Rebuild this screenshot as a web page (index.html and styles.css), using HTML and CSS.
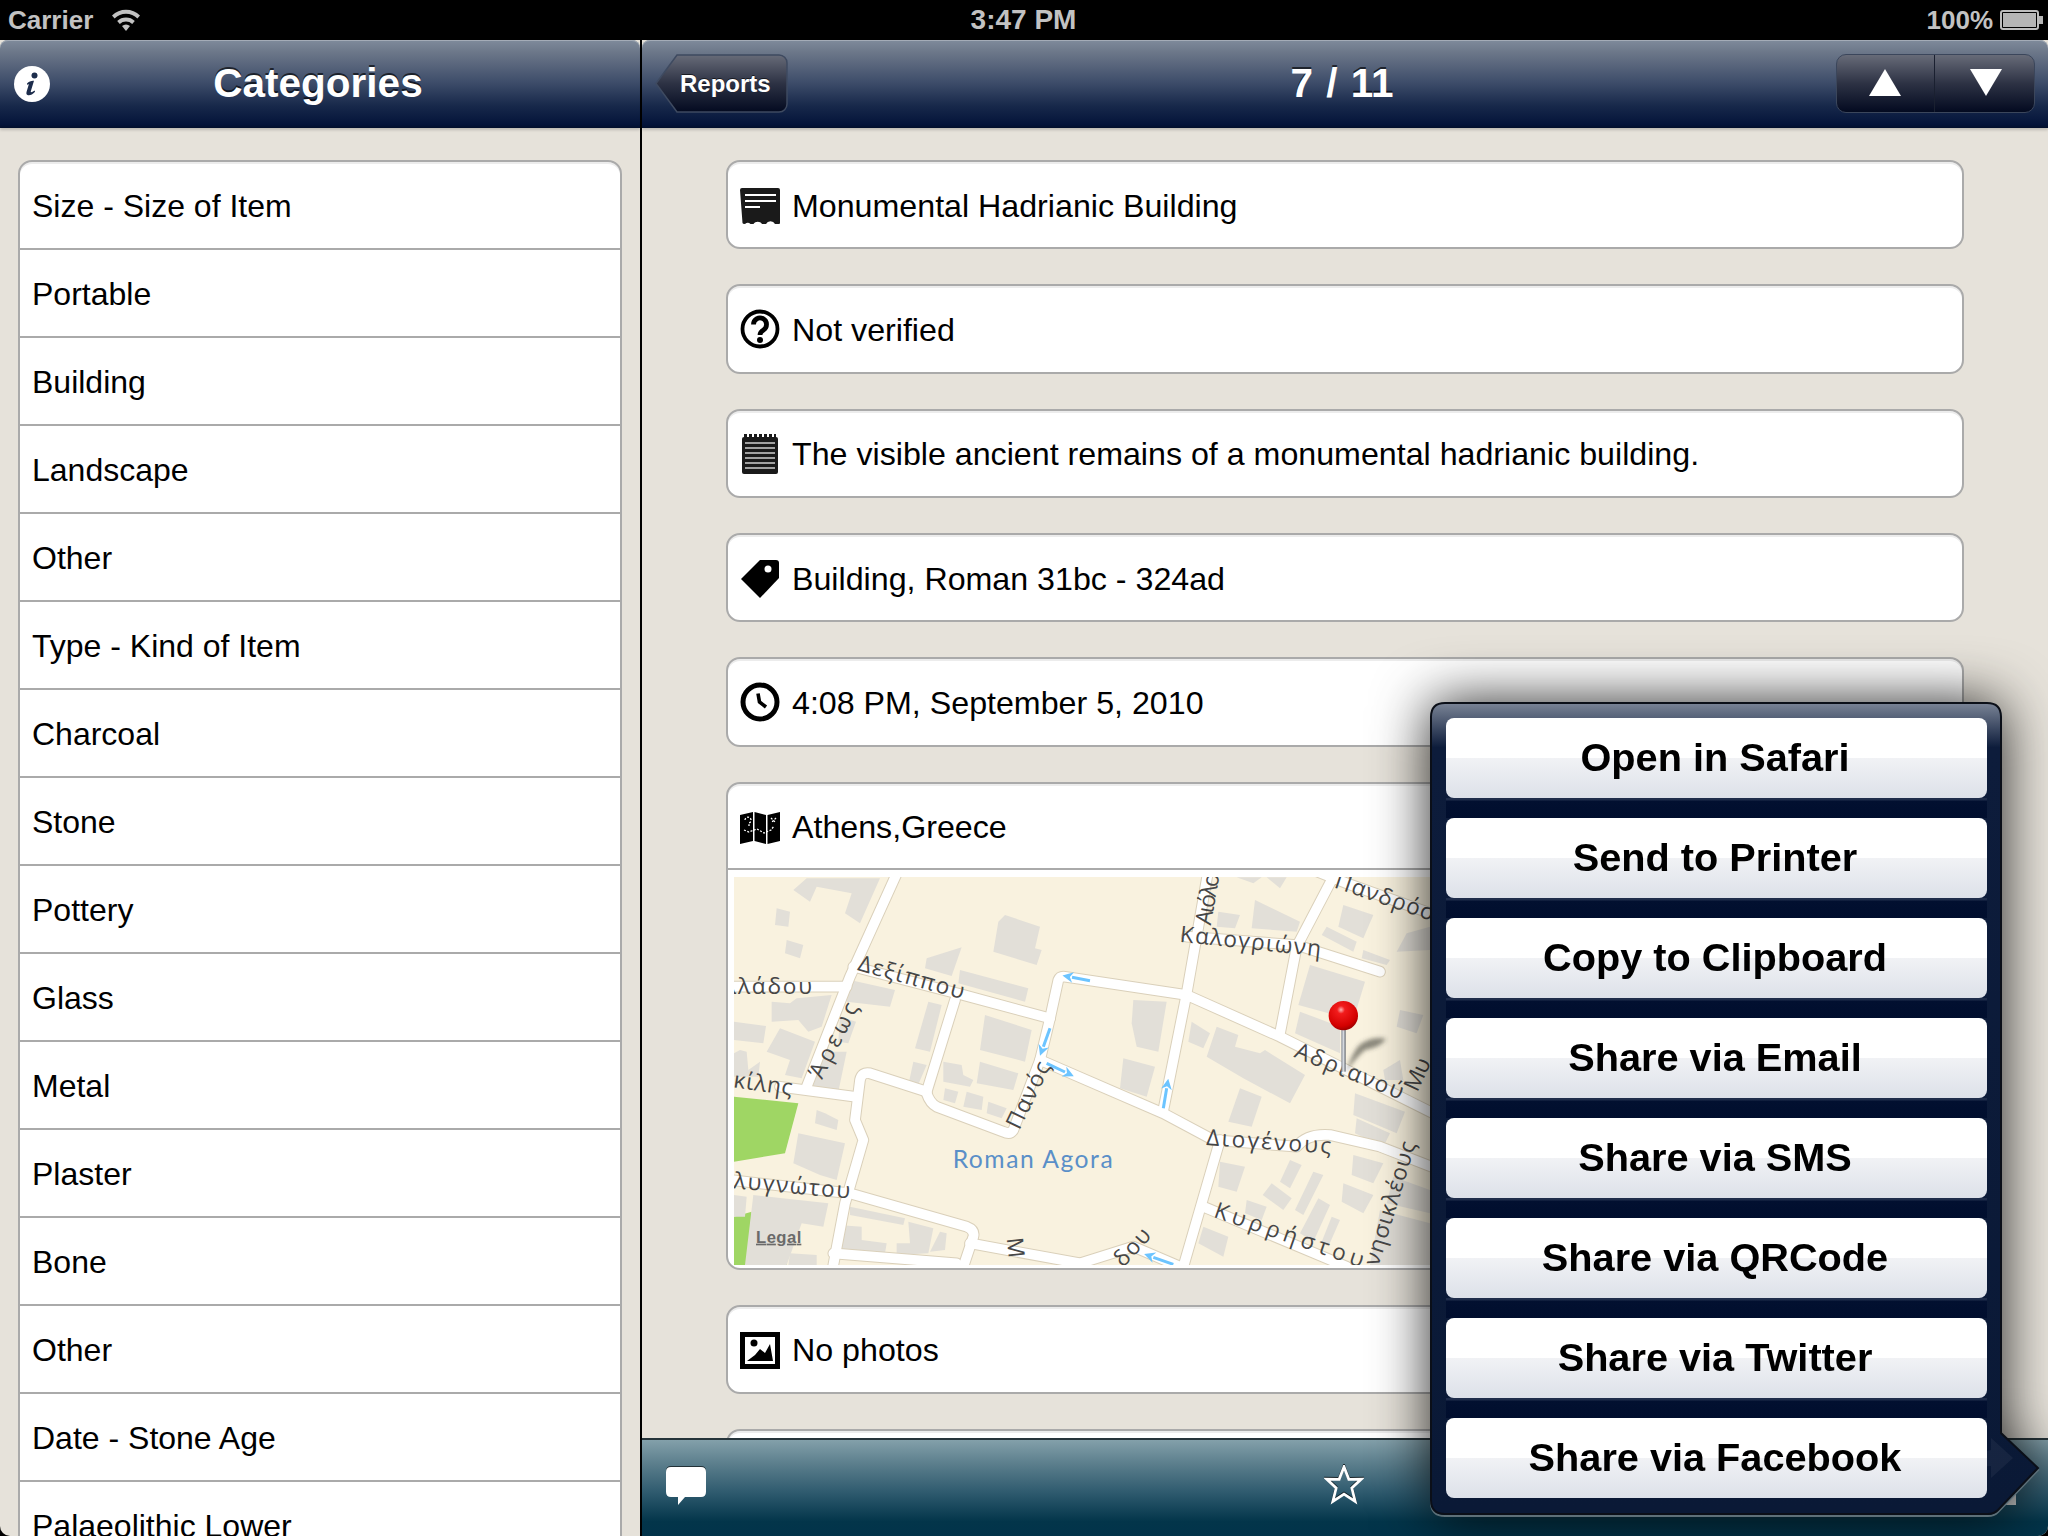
FILE: index.html
```html
<!DOCTYPE html>
<html lang="en">
<head>
<meta charset="utf-8">
<title>Reports</title>
<link rel="stylesheet" href="styles.css">
</head>
<body>
<div class="screen">
  <header class="status">
    <div class="status-left">
      <span>Carrier</span>
      <svg class="wifi" viewBox="0 0 30 24"><path d="M1 8.500a20 20 0 0 1 28 0l-2.600 3a16 16 0 0 0-22.800 0z"/><path d="M6.200 14a13 13 0 0 1 17.600 0l-2.600 3a9 9 0 0 0-12.400 0z"/><path d="M11 19a6 6 0 0 1 8 0l-4 5z"/></svg>
    </div>
    <div class="status-time">3:47 PM</div>
    <div class="status-right">
      <span>100%</span>
      <svg class="battery" viewBox="0 0 43 20"><rect x="1" y="1" width="37" height="18" rx="2" class="batt-line"/><rect x="3" y="3" width="33" height="14" class="batt-fill"/><rect x="39" y="6" width="4" height="8" class="batt-fill"/></svg>
    </div>
  </header>

  <div class="panes">
    <aside class="sidebar">
      <div class="navbar navbar-left">
        <svg class="info" viewBox="0 0 36 36"><circle cx="18" cy="18" r="18" fill="#fff"/><circle cx="20.500" cy="9.500" r="3" fill="#1d2d4c"/><path d="M13 17.500c2-2 4.500-3 7-2.700l-3.200 10.400c-.3 1.300.9 1.500 3.700-.7l.6 1.200c-2.500 2.700-5 3.900-7 3.500-1.800-.4-2-1.800-1.500-3.500l2.300-7.700c-.7.300-1 .5-1.500 1z" fill="#1d2d4c"/></svg>
        <h1 class="nav-title">Categories</h1>
        <div></div>
      </div>
      <div class="list-wrap">
        <ul class="list">
          <li>Size - Size of Item</li>
          <li>Portable</li>
          <li>Building</li>
          <li>Landscape</li>
          <li>Other</li>
          <li>Type - Kind of Item</li>
          <li>Charcoal</li>
          <li>Stone</li>
          <li>Pottery</li>
          <li>Glass</li>
          <li>Metal</li>
          <li>Plaster</li>
          <li>Bone</li>
          <li>Other</li>
          <li>Date - Stone Age</li>
          <li>Palaeolithic Lower</li>
        </ul>
      </div>
    </aside>

    <main class="detail">
      <div class="navbar navbar-right">
        <button class="back">
          <svg class="back-shape" viewBox="0 0 133 59" preserveAspectRatio="none">
            <defs><linearGradient id="btnGrad" x1="0" y1="0" x2="0" y2="1"><stop offset="0" stop-color="#676b78"/><stop offset=".5" stop-color="#2d3244"/><stop offset="1" stop-color="#030a20"/></linearGradient></defs>
            <path d="M22 1H124a8 8 0 0 1 8 8V50a8 8 0 0 1-8 8H22L1 29.500z" fill="url(#btnGrad)" stroke="#3e4a60" stroke-width="1.500"/>
          </svg>
          <span class="back-label">Reports</span>
        </button>
        <h1 class="nav-title">7 / 11</h1>
        <div class="segment">
          <div class="seg"><svg class="seg-arrow" viewBox="0 0 32 27"><path d="M16 0L32 27H0z"/></svg></div>
          <div class="seg seg-down"><svg class="seg-arrow" viewBox="0 0 32 27"><path d="M0 0H32L16 27z"/></svg></div>
        </div>
      </div>

      <div class="content">
        <section class="card">
          <div class="row">
            <svg class="ico" viewBox="0 0 40 40"><path d="M0 5q0-2 2-2h36q2 0 2 2v33q0 1-1 1h-4a5 5 0 0 0-9 0h-4a5 5 0 0 0-8.500 0h-3a4 4 0 0 0-5.500 0q-2.500 0-2.500-1z" fill="#1a1a1a"/><path d="M5 10h31M5 16h31M5 22h15" stroke="#fff" stroke-width="2" fill="none"/></svg>
            <span>Monumental Hadrianic Building</span>
          </div>
        </section>
        <section class="card">
          <div class="row">
            <svg class="ico" viewBox="0 0 40 40"><circle cx="20" cy="20" r="17.500" fill="none" stroke="#000" stroke-width="3.800"/><path d="M13.500 15.500a6.500 6.500 0 1 1 10 5.400c-2 1.300-3.500 2.300-3.500 5" fill="none" stroke="#000" stroke-width="4.800"/><circle cx="20" cy="31" r="3" fill="#000"/></svg>
            <span>Not verified</span>
          </div>
        </section>
        <section class="card">
          <div class="row">
            <svg class="ico" viewBox="0 0 40 40"><rect x="2" y="4" width="36" height="37" rx="2" fill="#1a1a1a"/><path d="M4 2.500h32" stroke="#1a1a1a" stroke-width="3" stroke-dasharray="3 2" fill="none"/><path d="M5 10h30M5 15h30M5 20h30M5 25h30M5 30h30M5 35h30" stroke="#cfcfcf" stroke-width="1.500" fill="none"/></svg>
            <span>The visible ancient remains of a monumental hadrianic building.</span>
          </div>
        </section>
        <section class="card">
          <div class="row">
            <svg class="ico" viewBox="0 0 40 40"><path d="M1 21L20 2H36q3 0 3 3V20L20 40z" fill="#000"/><circle cx="28" cy="11" r="3.500" fill="#fff"/></svg>
            <span>Building, Roman 31bc - 324ad</span>
          </div>
        </section>
        <section class="card">
          <div class="row">
            <svg class="ico" viewBox="0 0 40 40"><circle cx="20" cy="20" r="17" fill="none" stroke="#000" stroke-width="5"/><path d="M18 11.500l1.500 8.500 6.500 5" fill="none" stroke="#000" stroke-width="3.600"/></svg>
            <span>4:08 PM, September 5, 2010</span>
          </div>
        </section>

        <section class="card card-map">
          <div class="row row-map">
            <svg class="ico" viewBox="0 0 40 40"><path d="M0 9L13 6V35L0 38z M14.500 6L26 9V38L14.500 35z M27.500 9L40 6V35L27.500 38z" fill="#000"/><path d="M4 24l5 2 8-3 7 4 7-3 3-4M31 12l5 5M36 12l-5 5M5 14a3 3 0 1 1 4 3v3" fill="none" stroke="#fff" stroke-width="1.300" stroke-dasharray="2 1.500"/></svg>
            <span>Athens,Greece</span>
          </div>
          <div class="map-frame">
            <svg class="map" viewBox="12 21 3663 1164">
              <defs>
                <g id="roads">
                  <path d="M505 0L360 320L230 650"/>
                  <path d="M0 350H350"/>
                  <path d="M370 290L700 375L960 445"/>
                  <path d="M960 445L985 330Q990 318 1005 320L1370 375L1650 500L2130 740"/>
                  <path d="M960 445L930 570L850 780Q840 795 820 785L620 710Q600 700 590 670"/>
                  <path d="M930 570L1300 730L1450 810L1700 830Q1730 790 1800 795L1950 830L2130 900"/>
                  <path d="M150 650L375 680"/>
                  <path d="M590 665L420 610Q395 605 390 630L375 750L400 810L345 1000L310 1185"/>
                  <path d="M675 390L590 665"/>
                  <path d="M0 930L360 970L710 1070Q735 1080 730 1100L700 1190"/>
                  <path d="M720 1120L1050 1180L1210 1130L1350 1190"/>
                  <path d="M310 1150L680 1180"/>
                  <path d="M1435 0L1370 370L1300 720"/>
                  <path d="M1370 200L1700 225L1950 305"/>
                  <path d="M1810 20L1700 230L1650 490"/>
                  <path d="M1750 0L1850 40L2130 140"/>
                  <path d="M1470 810L1360 1190"/>
                  <path d="M1420 1010L1850 1190"/>
                </g>
                <marker id="arrowHead" viewBox="0 0 10 10" refX="1" refY="5" markerWidth="3.600" markerHeight="3.600" orient="auto-start-reverse"><path d="M0 5L10 0L7 5L10 10z" class="arrow-head" transform="rotate(180 5 5)"/></marker>
                <radialGradient id="pinHead" cx=".42" cy=".3" r=".75"><stop offset="0" stop-color="#ffb0b0"/><stop offset=".18" stop-color="#f21c1c"/><stop offset=".75" stop-color="#d30000"/><stop offset="1" stop-color="#8e0000"/></radialGradient>
                <linearGradient id="pinLine" x1="0" x2="1" y1="0" y2="0"><stop offset="0" stop-color="#8a8f98"/><stop offset=".5" stop-color="#d5d9de"/><stop offset="1" stop-color="#5f646c"/></linearGradient>
                <filter id="soft" x="-30%" y="-30%" width="160%" height="160%"><feGaussianBlur stdDeviation="6"/></filter>
              </defs>

              <rect x="12" y="21" width="3663" height="1164" class="land"/>

              <g class="park">
                <polygon points="12,680 205,700 165,850 12,875"/>
                <polygon points="12,1040 65,1025 50,1185 12,1185"/>
                <polygon points="125,1040 185,1035 170,1185 120,1185"/>
              </g>

              <g class="bld">
                <polygon points="190,60 230,25 450,25 390,160 345,130 365,70 260,50 240,95"/>
                <polygon points="140,115 180,125 175,170 135,165"/>
                <polygon points="170,210 220,225 210,265 165,250"/>
                <polygon points="790,245 805,155 825,135 930,170 915,235 935,240 920,285"/>
                <polygon points="590,265 695,232 665,318 585,295"/>
                <polygon points="690,300 895,355 885,395 685,340"/>
                <polygon points="360,330 495,360 480,410 350,395"/>
                <polygon points="125,395 180,400 200,385 305,375 275,470 235,485 205,450 125,455"/>
                <polygon points="12,455 108,468 100,520 12,510"/>
                <polygon points="150,475 255,515 215,625 165,615 180,570 110,545"/>
                <polygon points="330,440 378,455 355,520 325,515"/>
                <polygon points="290,545 350,545 325,665 245,650"/>
                <polygon points="12,550 30,540 50,545 55,600 90,575 85,620 12,620"/>
                <polygon points="595,395 635,405 600,545 555,535"/>
                <polygon points="550,575 590,585 560,655 535,645"/>
                <polygon points="765,435 905,480 885,575 750,540"/>
                <polygon points="640,575 695,585 700,615 730,630 720,650 640,635"/>
                <polygon points="645,655 685,665 675,700 640,690"/>
                <polygon points="710,665 760,680 755,720 700,710"/>
                <polygon points="775,695 830,715 815,745 770,730"/>
                <polygon points="750,575 865,610 850,660 740,640"/>
                <polygon points="205,790 345,820 320,930 270,915 190,880"/>
                <polygon points="260,720 285,730 325,750 320,780 255,760"/>
                <polygon points="70,975 295,1000 280,1070 215,1060 170,1185 45,1185"/>
                <polygon points="12,975 50,980 45,1040 12,1040"/>
                <polygon points="325,1065 395,1070 395,1110 470,1120 465,1150 320,1140"/>
                <polygon points="360,1010 525,1045 520,1065 360,1035"/>
                <polygon points="535,1055 610,1075 595,1150 500,1155 500,1120 540,1120"/>
                <polygon points="630,1085 650,1090 645,1140 600,1145"/>
                <polygon points="180,1150 260,1155 260,1185 175,1185"/>
              </g>
              <g class="bld" transform="translate(1050 0)">
                <polygon points="160,390 260,395 235,545 170,530 155,460"/>
                <polygon points="130,565 225,590 200,680 120,655"/>
                <polygon points="335,455 390,490 370,535 325,515"/>
                <polygon points="410,470 475,495 465,530 540,550 555,540 675,615 630,700 490,625 380,560"/>
                <polygon points="480,655 545,680 515,770 445,755"/>
                <polygon points="525,90 660,155 650,185 515,175"/>
                <polygon points="415,125 480,135 465,175 410,170"/>
                <polygon points="725,195 740,170 830,215 820,245"/>
                <polygon points="790,105 880,135 850,205 775,170"/>
                <polygon points="690,285 855,335 820,450 655,405"/>
                <polygon points="660,425 780,470 780,550 645,490"/>
                <polygon points="850,240 930,270 920,285 845,265"/>
                <polygon points="420,875 495,890 470,965 415,950"/>
                <polygon points="630,870 665,885 630,955 600,935"/>
                <polygon points="700,905 730,915 670,1035 645,1020"/>
                <polygon points="575,940 635,985 610,1020 548,975"/>
                <polygon points="500,990 560,1010 545,1050 495,1030"/>
                <polygon points="715,985 750,1005 700,1115 660,1090"/>
                <polygon points="755,1040 780,1050 745,1130 725,1115"/>
                <polygon points="370,1070 445,1100 430,1160 355,1120"/>
                <polygon points="820,855 910,880 880,940 815,915"/>
                <polygon points="790,940 880,975 850,1030 785,995"/>
                <polygon points="825,670 975,725 950,790 820,735"/>
                <polygon points="830,745 930,790 910,830 825,790"/>
                <polygon points="910,600 960,570 970,630 915,630"/>
                <polygon points="960,420 1030,435 1010,490 950,470"/>
                <polygon points="470,22 545,22 520,40"/>
                <polygon points="560,22 620,22 600,55"/>
                <polygon points="980,190 1050,170 1050,240 950,245"/>
                <polygon points="940,920 1050,960 1050,1030 920,1000"/>
                <polygon points="900,1020 1050,1060 1050,1185 870,1185"/>
              </g>

              <use href="#roads" class="road-casing"/>
              <use href="#roads" class="road-fill"/>

              <g class="oneway">
                <path d="M1080 332L1026 322" marker-end="url(#arrowHead)"/>
                <path d="M960 475L940 530" marker-end="url(#arrowHead)"/>
                <path d="M950 580L1005 606" marker-end="url(#arrowHead)"/>
                <path d="M1300 715L1310 655" marker-end="url(#arrowHead)"/>
                <path d="M1330 1183L1270 1162" marker-end="url(#arrowHead)"/>
              </g>

              <text class="ml" transform="translate(-18 372)" textLength="264">λλάδου</text>
              <text class="ml" transform="translate(380 300) rotate(15.500)" textLength="328">Δεξίππου</text>
              <text class="ml" transform="translate(276 630) rotate(-63)" textLength="245">Άρεως</text>
              <text class="ml" transform="translate(8 652) rotate(8)" textLength="178">κίλης</text>
              <text class="ml" transform="translate(10 955) rotate(5)" textLength="350">λυγνώτου</text>
              <text class="ml" transform="translate(868 782) rotate(-64)" textLength="215">Πανός</text>
              <text class="ml" transform="translate(830 1105) rotate(84)" textLength="110">Μι</text>
              <text class="ml" transform="translate(1442 167) rotate(-80)" textLength="190">Αιόλου</text>
              <text class="ml" transform="translate(1348 215) rotate(6)" textLength="425">Καλογριώνη</text>
              <text class="ml" transform="translate(1810 52) rotate(19)" textLength="400">Πανδρόσου</text>
              <text class="ml" transform="translate(1690 560) rotate(22)" textLength="345">Αδριανού</text>
              <text class="ml" transform="translate(1428 825) rotate(4)" textLength="375">Διογένους</text>
              <text class="ml" transform="translate(1448 1040) rotate(19)" textLength="470">Κυρρήστου</text>
              <text class="ml" transform="translate(1945 1190) rotate(-73)" textLength="385">νησικλέους</text>
              <text class="ml" transform="translate(2062 668) rotate(-65)" textLength="100">Μυ</text>
              <text class="ml" transform="translate(1180 1195) rotate(-48)" textLength="130">δου</text>
              <text class="ml-place" x="668" y="893" textLength="480">Roman Agora</text>
              <text class="ml-legal" x="78" y="1118" textLength="136">Legal</text>

              <path d="M1848 605Q1872 535 1895 520Q1930 498 1968 506Q1955 530 1905 540Q1875 565 1850 605z" class="pin-shadow" filter="url(#soft)"/>
              <rect x="1834" y="475" width="13" height="130" fill="url(#pinLine)"/>
              <circle cx="1840" cy="437" r="44" fill="url(#pinHead)"/>
            </svg>
          </div>
        </section>

        <section class="card">
          <div class="row">
            <svg class="ico" viewBox="0 0 40 40"><rect x="0" y="3" width="40" height="37" fill="#000"/><rect x="5" y="8" width="30" height="27" fill="#fff"/><circle cx="14" cy="14" r="3.500" fill="#000"/><path d="M7 32l8-6 5-6 5 4 5-9 3 17z" fill="#000"/></svg>
            <span>No photos</span>
          </div>
        </section>
        <section class="card"></section>
      </div>

      <footer class="toolbar">
        <svg class="tool-bubble" viewBox="0 0 40 38"><path d="M5 0H35q5 0 5 5V25q0 5-5 5H19L12 38V30H5q-5 0-5-5V5q0-5 5-5z"/></svg>
        <svg class="tool-star" viewBox="0 0 44 44"><polygon points="22,2 27.300,15.700 41,15.500 30.600,25.300 34.300,40 22,32 9.700,40 13.400,25.300 3,15.500 16.700,15.700"/></svg>
        <svg class="tool-share" viewBox="0 0 36 38"><path d="M0 16H36V38H0z"/></svg>
      </footer>
    </main>
  </div>

  <div class="popover">
    <svg class="pop-frame" viewBox="0 0 607 811">
      <defs>
        <linearGradient id="popGrad" gradientUnits="userSpaceOnUse" x1="0" y1="0" x2="0" y2="811">
          <stop offset="0" stop-color="#7a8496"/>
          <stop offset=".055" stop-color="#0d1c3b"/>
          <stop offset="1" stop-color="#0a1936"/>
        </linearGradient>
      </defs>
      <path d="M14 0H556Q570 0 570 14V730L607 765L567 807Q563 811 557 811H14Q0 811 0 797V14Q0 0 14 0Z" transform="translate(0 2)" fill="none" stroke="#5d7079" stroke-width="2"/>
      <path d="M14 0H556Q570 0 570 14V730L607 765L567 807Q563 811 557 811H14Q0 811 0 797V14Q0 0 14 0Z" fill="url(#popGrad)" stroke="#0b0f18" stroke-width="2"/>
      <path d="M530 775q4-24 30-28v-12l22 20-22 20v-12q-18 0-30 12z" fill="#fff" opacity=".05"/>
    </svg>
    <div class="pop-list">
      <button class="pop-btn">Open in Safari</button>
      <button class="pop-btn">Send to Printer</button>
      <button class="pop-btn">Copy to Clipboard</button>
      <button class="pop-btn">Share via Email</button>
      <button class="pop-btn">Share via SMS</button>
      <button class="pop-btn">Share via QRCode</button>
      <button class="pop-btn">Share via Twitter</button>
      <button class="pop-btn">Share via Facebook</button>
    </div>
  </div>
</div>
</body>
</html>
```

FILE: styles.css
```css
* { box-sizing: border-box; }
html, body { margin: 0; padding: 0; background: #000; }
body { font-family: "Liberation Sans", Arial, sans-serif; color: #000; }
h1, ul { margin: 0; padding: 0; }
button { font-family: inherit; border: 0; padding: 0; }

.screen { position: relative; width: 2048px; height: 1536px; overflow: hidden; background: #000; display: flex; flex-direction: column; }

/* status bar */
.status { height: 40px; flex: none; display: grid; grid-template-columns: 1fr auto 1fr; align-items: center; padding: 0 5px 0 8px; color: #c2c2c2; font-size: 26px; font-weight: 700; }
.status-left { display: flex; align-items: center; gap: 18px; }
.wifi { width: 30px; height: 24px; fill: #c2c2c2; margin-top: -2px; }
.status-time { font-size: 28px; margin-right: 4px; }
.status-right { display: flex; align-items: center; justify-content: flex-end; gap: 7px; }
.battery { width: 43px; height: 20px; }
.batt-line { fill: none; stroke: #bdbdbd; stroke-width: 2; }
.batt-fill { fill: #b5b5b5; }

/* panes */
.panes { flex: 1; min-height: 0; display: flex; gap: 2px; border-radius: 0 0 10px 10px; overflow: hidden; }
.sidebar { width: 640px; flex: none; display: flex; flex-direction: column; background: #e6e2da; }
.detail { flex: 1; min-width: 0; display: flex; flex-direction: column; background: #e6e2da; }

/* nav bars */
.navbar { height: 88px; flex: none; display: grid; grid-template-columns: 1fr auto 1fr; align-items: center; border-radius: 8px 8px 0 0; background: linear-gradient(#7f8b9b 0, #6c7789 14%, #3e4d6a 48%, #17284a 75%, #04143a 96%, #020f2c 100%); box-shadow: inset 0 1px 0 #a4acb7, 0 2px 3px rgba(0,0,0,.18); position: relative; z-index: 1; }
.navbar-left { padding: 0 14px; }
.navbar-right { padding: 0 13px 0 13px; }
.nav-title { font-size: 40.500px; font-weight: 700; color: #fff; text-shadow: 0 -2px 0 rgba(0,0,0,.65); line-height: 1; padding-bottom: 2px; word-spacing: 2px; }
.navbar-left .nav-title { margin-right: 4px; }
.navbar-right .nav-title { margin-right: 6px; }
.info { width: 36px; height: 36px; }

.back { position: relative; width: 133px; height: 59px; margin-bottom: 1px; background: none; justify-self: start; display: flex; align-items: center; }
.back-shape { position: absolute; inset: 0; width: 100%; height: 100%; }
.back-label { position: relative; margin-left: 25px; color: #fff; font-size: 24px; font-weight: 700; text-shadow: 0 -1px 0 rgba(0,0,0,.6); }

.segment { justify-self: end; display: flex; width: 199px; height: 59px; margin-bottom: 1px; border-radius: 10px; overflow: hidden; border: 1px solid #3b465b; background: linear-gradient(#676b78, #2d3244 50%, #030a20); }
.seg { flex: 1; display: flex; align-items: center; justify-content: center; }
.seg-down { border-left: 1px solid #1a2030; padding-left: 3px; }
.seg-arrow { width: 32px; height: 27px; fill: #fff; margin-bottom: 2px; }

/* category list */
.list-wrap { flex: 1; min-height: 0; overflow: hidden; padding: 32px 18px 0 18px; }
.list { list-style: none; background: #fff; border: 2px solid #aaa; border-radius: 14px 14px 0 0; box-shadow: inset 0 2px 0 #ececec; overflow: hidden; }
.list li { height: 88px; display: flex; align-items: center; padding: 2px 0 0 12px; font-size: 32px; border-bottom: 2px solid #aaa; }

/* detail content */
.content { flex: 1; min-height: 0; overflow: hidden; padding: 32px 84px 0 84px; display: flex; flex-direction: column; gap: 35px; }
.card { flex: none; height: 89.330px; background: #fff; border: 2px solid #aaa; border-radius: 14px; box-shadow: inset 0 2px 0 #ececec; overflow: hidden; }
.row { height: 85.330px; display: flex; align-items: center; gap: 12px; padding-left: 12px; font-size: 32.200px; }
.row span { padding-top: 3px; }
.ico { width: 40px; height: 40px; flex: none; overflow: visible; }
.card-map { height: 488px; }
.row-map { height: 86.330px; border-bottom: 2px solid #aaa; }
.map-frame { padding: 7px 6px 0; }
.map { display: block; width: 1221px; height: 388px; }

.land { fill: #f9f2df; }
.park { fill: #9fd664; }
.bld { fill: #e2dfd8; }
.road-casing { fill: none; stroke: #dad0ba; stroke-width: 35; stroke-linejoin: round; stroke-linecap: round; }
.road-fill { fill: none; stroke: #fff; stroke-width: 29; stroke-linejoin: round; stroke-linecap: round; }
.oneway { fill: none; stroke: #6cc4ff; stroke-width: 9; }
.arrow-head { fill: #6cc4ff; stroke: none; }
.ml { font-family: "Open Sans", "Noto Sans", sans-serif; font-size: 68px; fill: #464646; }
.ml-place { font-family: "Lato", "Open Sans", sans-serif; font-size: 74px; fill: #5a8fc8; }
.ml-legal { font-family: "Liberation Sans", Arial, sans-serif; font-size: 50px; font-weight: 700; fill: #6a6a6a; text-decoration: underline; }
.pin-shadow { fill: rgba(70,70,60,.6); }

/* toolbar */
.toolbar { height: 98px; flex: none; display: flex; justify-content: space-between; align-items: flex-start; padding: 27px 32px 0 24px; background: linear-gradient(#83a0aa 0, #5b7e8c 25%, #2e5a6e 55%, #03354a 85%, #02334a 100%); border-top: 2px solid #26343a; position: relative; }
.tool-bubble { width: 40px; height: 38px; fill: #fff; filter: drop-shadow(0 -1px 0 rgba(0,0,0,.6)); }
.tool-star { width: 40px; height: 40px; margin-top: -2px; margin-left: 2px; fill: none; stroke: #fff; stroke-width: 3; filter: drop-shadow(0 -1px 0 rgba(0,0,0,.7)); }
.tool-share { width: 36px; height: 38px; fill: #cfd0d0; }

/* popover */
.popover { position: absolute; left: 1431px; top: 703px; width: 607px; height: 811px; filter: drop-shadow(0 0 28px rgba(0,0,0,.85)); }
.pop-frame { position: absolute; inset: 0; width: 100%; height: 100%; overflow: visible; }
.pop-list { position: relative; width: 541px; margin: 15px 0 0 14.500px; display: flex; flex-direction: column; gap: 20px; }
.pop-btn { position: relative; height: 80px; width: 100%; padding: 0 2px 2px 0; font-size: 39.700px; font-weight: 700; color: #000; border-radius: 8px; background: linear-gradient(#fff 0, #fff 50%, #f1f2f5 50%, #dde1e9 100%); }
.pop-btn:not(:last-child)::after { content: ""; position: absolute; left: 0; right: 0; top: 100%; height: 20px; background: linear-gradient(#1f2d4b 0, #1f2d4b 2px, #021030 3px, #000e2e 100%); }
```
